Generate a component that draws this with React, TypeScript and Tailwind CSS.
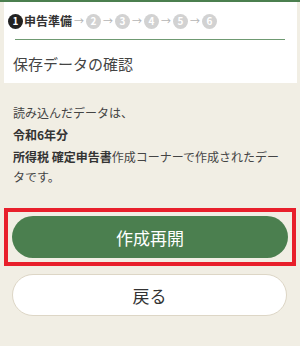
import React from 'react';

const steps = ['2', '3', '4', '5', '6'];

const Arrow: React.FC = () => (
  <span className="mx-[2px] text-[10px] leading-none text-[#b5b5b5]">→</span>
);

const App: React.FC = () => {
  return (
    <div
      className="w-[300px] h-[346px] bg-[#f1eee4] border-t-2 border-[#4b7f4f] overflow-hidden"
      style={{ fontFamily: '"Noto Sans CJK JP", "Noto Sans", sans-serif' }}
    >
      {/* Header card */}
      <div className="ml-[4px] mr-[3px] bg-white pt-[12px] pb-[8px]">
        <div className="flex items-center h-[14px] pl-[4px]">
          <span className="w-[15px] h-[15px] rounded-full bg-[#222] text-white text-[10px] font-bold flex items-center justify-center leading-none">
            1
          </span>
          <span className="ml-[1px] text-[12px] font-bold text-[#333] leading-none">申告準備</span>
          {steps.map((n) => (
            <React.Fragment key={n}>
              <Arrow />
              <span className="w-[15px] h-[15px] rounded-full bg-[#d2d2d2] text-white text-[10px] font-bold flex items-center justify-center leading-none">
                {n}
              </span>
            </React.Fragment>
          ))}
        </div>
        <div className="mt-[11px] ml-[11px] mr-[12px] h-px bg-[#6f9a72]" />
        <h1 className="mt-[13px] pl-[9px] text-[15px] leading-[22px] text-[#444] font-normal">
          保存データの確認
        </h1>
      </div>

      {/* Body */}
      <div className="mt-[19px] px-[13px] text-[12px] text-[#444]">
        <p className="leading-[22px]">読み込んだデータは、</p>
        <p className="leading-[22px] font-bold text-[#333]">令和6年分</p>
        <p className="mt-[1px] leading-[20px]">
          <span className="font-bold text-[#333]">所得税 確定申告書</span>作成コーナーで作成されたデータです。
        </p>
      </div>

      {/* Buttons */}
      <div className="mt-[21px] mx-[4px] border-4 border-[#e81f2b] p-[4px]">
        <button className="w-full h-[42px] rounded-full bg-[#4b7f4f] text-white text-[17px] leading-none">
          作成再開
        </button>
      </div>
      <div className="mt-[8px] px-[12px] pr-[13px]">
        <button className="w-full h-[42px] rounded-full bg-white border border-[#ddd6c6] text-[#333] text-[17px] leading-none">
          戻る
        </button>
      </div>
    </div>
  );
};

export default App;
